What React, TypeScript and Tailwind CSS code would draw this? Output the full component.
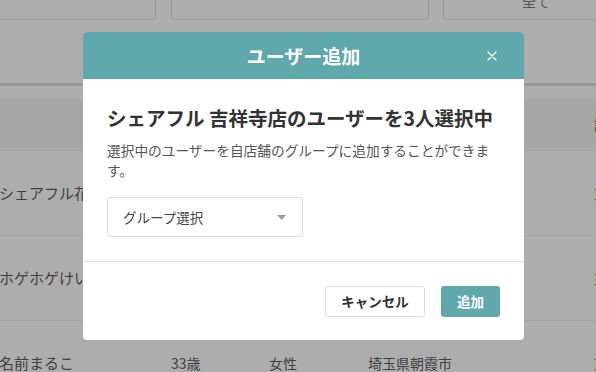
import React from "react";

const font = { fontFamily: '"Noto Sans CJK JP", "Noto Sans", sans-serif' };

function Row({ name, age, gender, addr, last }: { name: string; age: string; gender: string; addr: string; last?: boolean }) {
  return (
    <div className={`flex items-center h-[85px] shrink-0 text-[14px] text-[#404040] whitespace-nowrap ${last ? "" : "border-b border-[#a2a2a2]"}`}>
      <div className="w-[172px] shrink-0 ml-[-1px] text-[15px]">{name}</div>
      <div className="w-[98px] shrink-0">{age}</div>
      <div className="w-[99px] shrink-0">{gender}</div>
      <div className="w-[226px] shrink-0">{addr}</div>
      <div className="shrink-0">東京</div>
    </div>
  );
}

export default function App() {
  return (
    <div className="relative w-[596px] h-[372px] overflow-hidden bg-[#adadad]" style={font}>
      {/* background page */}
      <div className="flex flex-col">
        <div className="flex mt-[-22px] h-[42px] shrink-0">
          <div className="ml-[-10px] w-[166px] shrink-0 h-full border border-[#9c9c9c] rounded-[4px]" />
          <div className="ml-[15px] w-[258px] shrink-0 h-full border border-[#9c9c9c] rounded-[4px]" />
          <div className="ml-[14px] w-[170px] shrink-0 h-full border border-[#9c9c9c] rounded-[4px] pl-[78px] pt-[12px] text-[14px] leading-[20px] text-[#555] whitespace-nowrap">全て</div>
        </div>
        <div className="mt-[63px] h-[3px] shrink-0 bg-[#999999]" />
        <div className="mt-[13px] h-[52px] shrink-0 bg-[#a7a7a7] flex items-center border-b border-[#a2a2a2] text-[14px] text-[#404040]">
          <div className="ml-[594px] shrink-0 whitespace-nowrap">記録</div>
        </div>
        <Row name="シェアフル花子" age="28歳" gender="女性" addr="東京都武蔵野市" />
        <Row name="ホゲホゲけいこ" age="30歳" gender="女性" addr="東京都三鷹市" />
        <Row name="名前まるこ" age="33歳" gender="女性" addr="埼玉県朝霞市" last />
      </div>

      {/* modal */}
      <div className="absolute left-[83px] top-[32px] w-[441px] h-[308px] bg-white rounded-[4px] flex flex-col overflow-hidden">
        <div className="h-[47px] bg-[#5fa8ab] flex items-center shrink-0">
          <div className="w-[63px]" />
          <div className="flex-1 text-center text-white font-bold text-[19px] leading-none">ユーザー追加</div>
          <div className="w-[63px] flex justify-end pr-[27px]">
            <svg width="10" height="10" viewBox="0 0 10 10">
              <path d="M1 1 L9 9 M9 1 L1 9" stroke="white" strokeWidth="1.3" strokeLinecap="round" />
            </svg>
          </div>
        </div>
        <div className="px-6 pt-6 pb-6 flex flex-col items-start">
          <h2 className="text-[19.5px] leading-[30px] font-bold text-[#333] whitespace-nowrap">シェアフル 吉祥寺店のユーザーを3人選択中</h2>
          <p className="mt-[7px] text-[13.7px] leading-[20px] text-[#555] w-full">選択中のユーザーを自店舗のグループに追加することができます。</p>
          <div className="mt-[17px] w-[196px] h-[40px] border border-[#dcdcdc] rounded-[3px] flex items-center justify-between pl-[15px] pr-[16px]">
            <span className="text-[13.5px] text-[#444]">グループ選択</span>
            <svg width="9" height="5" viewBox="0 0 9 5">
              <path d="M0 0 L9 0 L4.5 5 Z" fill="#9a9a9a" />
            </svg>
          </div>
        </div>
        <div className="h-px bg-[#dcdcdc]" />
        <div className="flex justify-end gap-4 pt-6 pr-6">
          <button className="h-[31px] w-[100px] border border-[#dcdcdc] rounded-[3px] bg-white text-[13.5px] font-bold text-[#333]">キャンセル</button>
          <button className="h-[31px] w-[59px] rounded-[3px] bg-[#5fa8ab] text-[13.5px] font-bold text-white">追加</button>
        </div>
      </div>
    </div>
  );
}
